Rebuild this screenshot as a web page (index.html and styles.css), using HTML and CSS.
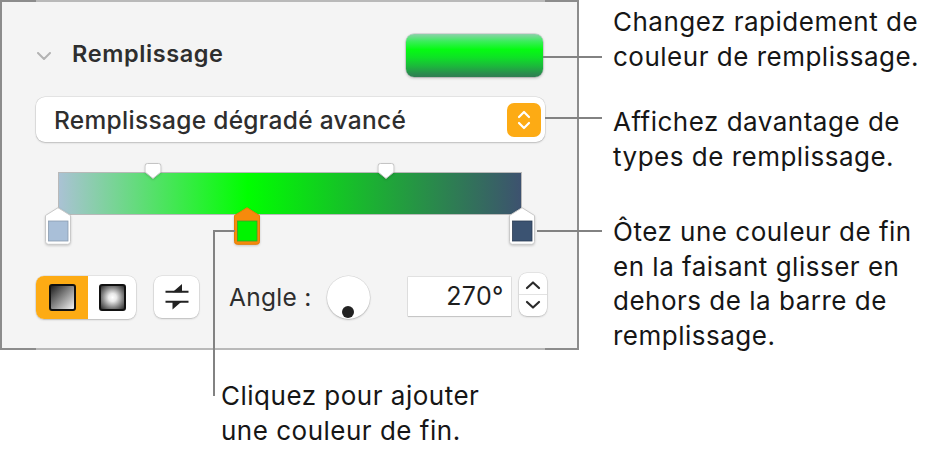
FILE: index.html
```html
<!DOCTYPE html>
<html lang="fr">
<head>
<meta charset="utf-8">
<title>Remplissage</title>
<link rel="stylesheet" href="styles.css">
</head>
<body>
<div class="page">
  <div class="left">
    <section class="panel">
      <div class="header">
        <svg class="chevron" width="14" height="8" viewBox="0 0 14 8"><path d="M1 1 L7 7 L13 1" fill="none" stroke="#b3b3b3" stroke-width="2" stroke-linecap="round" stroke-linejoin="round"/></svg>
        <span class="title">Remplissage</span>
        <div class="swatch"></div>
      </div>
      <div class="dropdown">
        <span class="dd-label">Remplissage dégradé avancé</span>
        <span class="popup-btn">
          <svg width="16" height="22" viewBox="0 0 16 22"><path d="M3 8 L8 3 L13 8 M3 14 L8 19 L13 14" fill="none" stroke="#fff" stroke-width="2.2" stroke-linecap="round" stroke-linejoin="round"/></svg>
        </span>
      </div>
      <div class="gradient-editor">
        <div class="track">
          <div class="bar"></div>
          <svg class="mid" style="left:20.4%" width="17" height="16" viewBox="0 0 17 16"><path d="M0.5 3 Q0.5 0.5 3 0.5 H14 Q16.5 0.5 16.5 3 V9 L8.5 15.5 L0.5 9 Z" fill="#fff" stroke="#c4c4c4"/></svg>
          <svg class="mid" style="left:70.6%" width="17" height="16" viewBox="0 0 17 16"><path d="M0.5 3 Q0.5 0.5 3 0.5 H14 Q16.5 0.5 16.5 3 V9 L8.5 15.5 L0.5 9 Z" fill="#fff" stroke="#c4c4c4"/></svg>
          <svg class="stop" style="left:0%" width="26" height="38" viewBox="0 0 26 38"><path d="M13 0.7 L25.5 8.5 V34.5 Q25.5 37.3 22.7 37.3 H3.3 Q0.5 37.3 0.5 34.5 V8.5 Z" fill="#fff" stroke="#c9c9c9"/><rect x="3.5" y="14" width="19.5" height="20" fill="#a9bfd8" stroke="#8a9cb0" stroke-width="0.8"/></svg>
          <svg class="stop" style="left:40.8%" width="26" height="38" viewBox="0 0 26 38"><path d="M13 0.7 L25.5 8.5 V34.5 Q25.5 37.3 22.7 37.3 H3.3 Q0.5 37.3 0.5 34.5 V8.5 Z" fill="#f68a0c" stroke="#e57d05"/><rect x="3.5" y="14" width="19.5" height="20" fill="#00f400" stroke="#39a02a" stroke-width="0.8"/></svg>
          <svg class="stop" style="left:100%" width="26" height="38" viewBox="0 0 26 38"><path d="M13 0.7 L25.5 8.5 V34.5 Q25.5 37.3 22.7 37.3 H3.3 Q0.5 37.3 0.5 34.5 V8.5 Z" fill="#fff" stroke="#c9c9c9"/><rect x="3.5" y="14" width="19.5" height="20" fill="#3b5372" stroke="#2c3e55" stroke-width="0.8"/></svg>
        </div>
      </div>
      <div class="controls">
        <div class="segmented">
          <span class="seg seg-on"><i class="grad-icon linear"></i></span>
          <span class="seg"><i class="grad-icon radial"></i></span>
        </div>
        <span class="swap">
          <svg width="26" height="28" viewBox="0 0 26 28"><path d="M1.5 8.7 H24.5 M1.5 18.7 H24.5" stroke="#222" stroke-width="2"/><path d="M8.5 9.2 L18 9.2 L18 1 Z M18 18.2 L8.5 18.2 L8.5 26.5 Z" fill="#222"/></svg>
        </span>
        <span class="angle-label">Angle :</span>
        <span class="knob"><i class="knob-dot"></i></span>
        <span class="field">270°</span>
        <span class="stepper">
          <svg width="18" height="40" viewBox="0 0 18 40"><path d="M3 13 L9 7.5 L15 13 M3 27 L9 32.5 L15 27" fill="none" stroke="#2a2a2a" stroke-width="2.2" stroke-linecap="round" stroke-linejoin="round"/></svg>
        </span>
      </div>
    </section>
    <p class="note note-bottom">Cliquez pour ajouter<br>une couleur de fin.</p>
  </div>
  <div class="notes">
    <p class="note n1">Changez rapidement de<br>couleur de remplissage.</p>
    <p class="note n2">Affichez davantage de<br>types de remplissage.</p>
    <p class="note n3">Ôtez une couleur de fin<br>en la faisant glisser en<br>dehors de la barre de<br>remplissage.</p>
  </div>
  <span class="leader h1"></span>
  <span class="leader h2"></span>
  <span class="leader h3"></span>
  <span class="leader h4"></span>
  <span class="leader v4"></span>
</div>
</body>
</html>
```
FILE: styles.css
```css
* { box-sizing: border-box; }
html, body { margin: 0; padding: 0; background: #fff; }
body { font-family: Inter, "Noto Sans", "Liberation Sans", sans-serif; color: #1a1a1a; }

.page {
  position: relative;
  width: 935px;
  height: 457px;
  display: flex;
  align-items: flex-start;
}

.left { display: flex; flex-direction: column; flex-shrink: 0; }

.panel {
  position: relative;
  width: 579px;
  height: 350px;
  border: 2px solid #8c8c8c;
  background: #f4f4f4;
  padding: 32px 32px 0 34px;
  display: flex;
  flex-direction: column;
}
.panel::before, .panel::after {
  content: "";
  position: absolute;
  left: 34px;
  right: 32px;
  height: 2px;
  background: #b9b9b9;
}
.panel::before { top: -2px; }
.panel::after { bottom: -2px; }

.header {
  height: 43px;
  display: flex;
  align-items: center;
}
.chevron { margin: 0 21px 0 1px; flex-shrink: 0; }
.title {
  font-size: 23.5px;
  font-weight: 600;
  color: #2e2e2e;
  letter-spacing: 0.6px;
  flex: 1;
  margin-top: -4px;
}
.swatch {
  flex-shrink: 0;
  width: 137px;
  height: 43px;
  margin-right: 2px;
  border-radius: 8px;
  background: linear-gradient(to bottom, #8fd0ac 0%, #3ded5e 16%, #05fb12 36%, #0ee126 55%, #1cb73c 75%, #2a8c4e 92%, #2f7d52 100%);
  box-shadow: 0 0 0 0.5px rgba(0,0,0,0.18), 0 1px 3px rgba(0,0,0,0.25);
}

.dropdown {
  margin-top: 20px;
  height: 45px;
  background: #fff;
  border-radius: 9px;
  box-shadow: 0 0 0 0.5px rgba(0,0,0,0.12), 0 1px 2px rgba(0,0,0,0.18);
  display: flex;
  align-items: center;
  padding: 0 4px 0 18px;
}
.dd-label {
  flex: 1;
  font-size: 24.5px;
  font-weight: 500;
  letter-spacing: 0.3px;
  color: #2e2e2e;
  white-space: nowrap;
}
.popup-btn {
  flex-shrink: 0;
  width: 34px;
  height: 34px;
  border-radius: 7px;
  background: #fdab14;
  display: flex;
  align-items: center;
  justify-content: center;
}

.gradient-editor {
  margin-top: 21px;
  height: 81px;
  padding: 9px 23px 0 22px;
}
.track { position: relative; height: 43px; }
.bar {
  height: 43px;
  border: 1px solid #b9b9b9;
  background: linear-gradient(to right, #aac2d4 0%, #00ff00 40.8%, #3d526f 100%);
}
.mid {
  position: absolute;
  top: -9px;
  transform: translateX(-50%);
  filter: drop-shadow(0 1px 1px rgba(0,0,0,0.15));
}
.stop {
  position: absolute;
  top: 35px;
  transform: translateX(-50%);
  filter: drop-shadow(0 1px 1px rgba(0,0,0,0.18));
}

.controls {
  margin-top: 29px;
  display: flex;
  align-items: flex-start;
}
.controls > * { flex-shrink: 0; }
.segmented {
  margin-top: 3px;
  width: 100px;
  height: 43px;
  border-radius: 8px;
  background: #fff;
  display: flex;
  overflow: hidden;
  box-shadow: 0 0 0 0.5px rgba(0,0,0,0.12), 0 1px 2px rgba(0,0,0,0.18);
}
.seg {
  width: 52px;
  display: flex;
  align-items: center;
  justify-content: center;
}
.seg + .seg { width: 48px; }
.seg-on { background: #fdab14; }
.grad-icon {
  width: 27px;
  height: 27px;
  border: 2.5px solid #111;
  border-radius: 3px;
}
.linear { background: linear-gradient(135deg, #1e1e1e 0%, #8a8a8a 50%, #f4f4f4 100%); }
.radial { background: radial-gradient(circle at 50% 50%, #fff 0%, #e8e8e8 25%, #8a8a8a 60%, #2a2a2a 100%); }

.swap {
  margin: 3px 0 0 18px;
  width: 45px;
  height: 42px;
  border-radius: 8px;
  background: #fff;
  box-shadow: 0 0 0 0.5px rgba(0,0,0,0.12), 0 1px 2px rgba(0,0,0,0.18);
  display: flex;
  align-items: center;
  justify-content: center;
}
.angle-label {
  margin: 9px 0 0 30px;
  font-size: 24.5px;
  letter-spacing: 0.3px;
  color: #2e2e2e;
  white-space: nowrap;
}
.knob {
  position: relative;
  margin: 3px 0 0 15px;
  width: 43px;
  height: 43px;
  border-radius: 50%;
  background: #fff;
  box-shadow: 0 0 0 0.5px rgba(0,0,0,0.12), 0 1px 2px rgba(0,0,0,0.2);
  display: flex;
  justify-content: center;
  align-items: flex-end;
  padding-bottom: 1px;
}
.knob-dot {
  width: 12px;
  height: 12px;
  border-radius: 50%;
  background: #222;
}
.field {
  margin: 4px 0 0 38px;
  width: 103px;
  height: 39px;
  background: #fff;
  box-shadow: 0 0 0 0.5px rgba(0,0,0,0.15), 0 1px 1px rgba(0,0,0,0.12);
  font-size: 25px;
  letter-spacing: 0.3px;
  color: #1e1e1e;
  text-align: right;
  padding-right: 7px;
  line-height: 39px;
}
.stepper {
  margin-left: 8px;
  width: 28px;
  height: 43px;
  border-radius: 8px;
  background: #fff;
  box-shadow: 0 0 0 0.5px rgba(0,0,0,0.12), 0 1px 2px rgba(0,0,0,0.18);
  display: flex;
  align-items: center;
  justify-content: center;
  background-image: linear-gradient(#e2e2e2, #e2e2e2);
  background-size: 100% 1px;
  background-position: 0 50%;
  background-repeat: no-repeat;
}

.note {
  margin: 0;
  font-size: 26px;
  line-height: 34.5px;
  letter-spacing: 0.5px;
  color: #161616;
  white-space: nowrap;
}
.note-bottom { margin: 29px 0 0 221px; }
.notes { margin-left: 34px; display: flex; flex-direction: column; }
.n1 { margin-top: 5px; }
.n2 { margin-top: 31px; }
.n3 { margin-top: 41px; }

.leader { position: absolute; background: #828282; }
.h1 { left: 543px; top: 56px; width: 59px; height: 2px; }
.h2 { left: 545px; top: 117px; width: 57px; height: 2px; }
.h3 { left: 537px; top: 230px; width: 65px; height: 2px; }
.h4 { left: 214px; top: 230px; width: 21px; height: 2px; }
.v4 { left: 213px; top: 230px; width: 2px; height: 166px; }
```
